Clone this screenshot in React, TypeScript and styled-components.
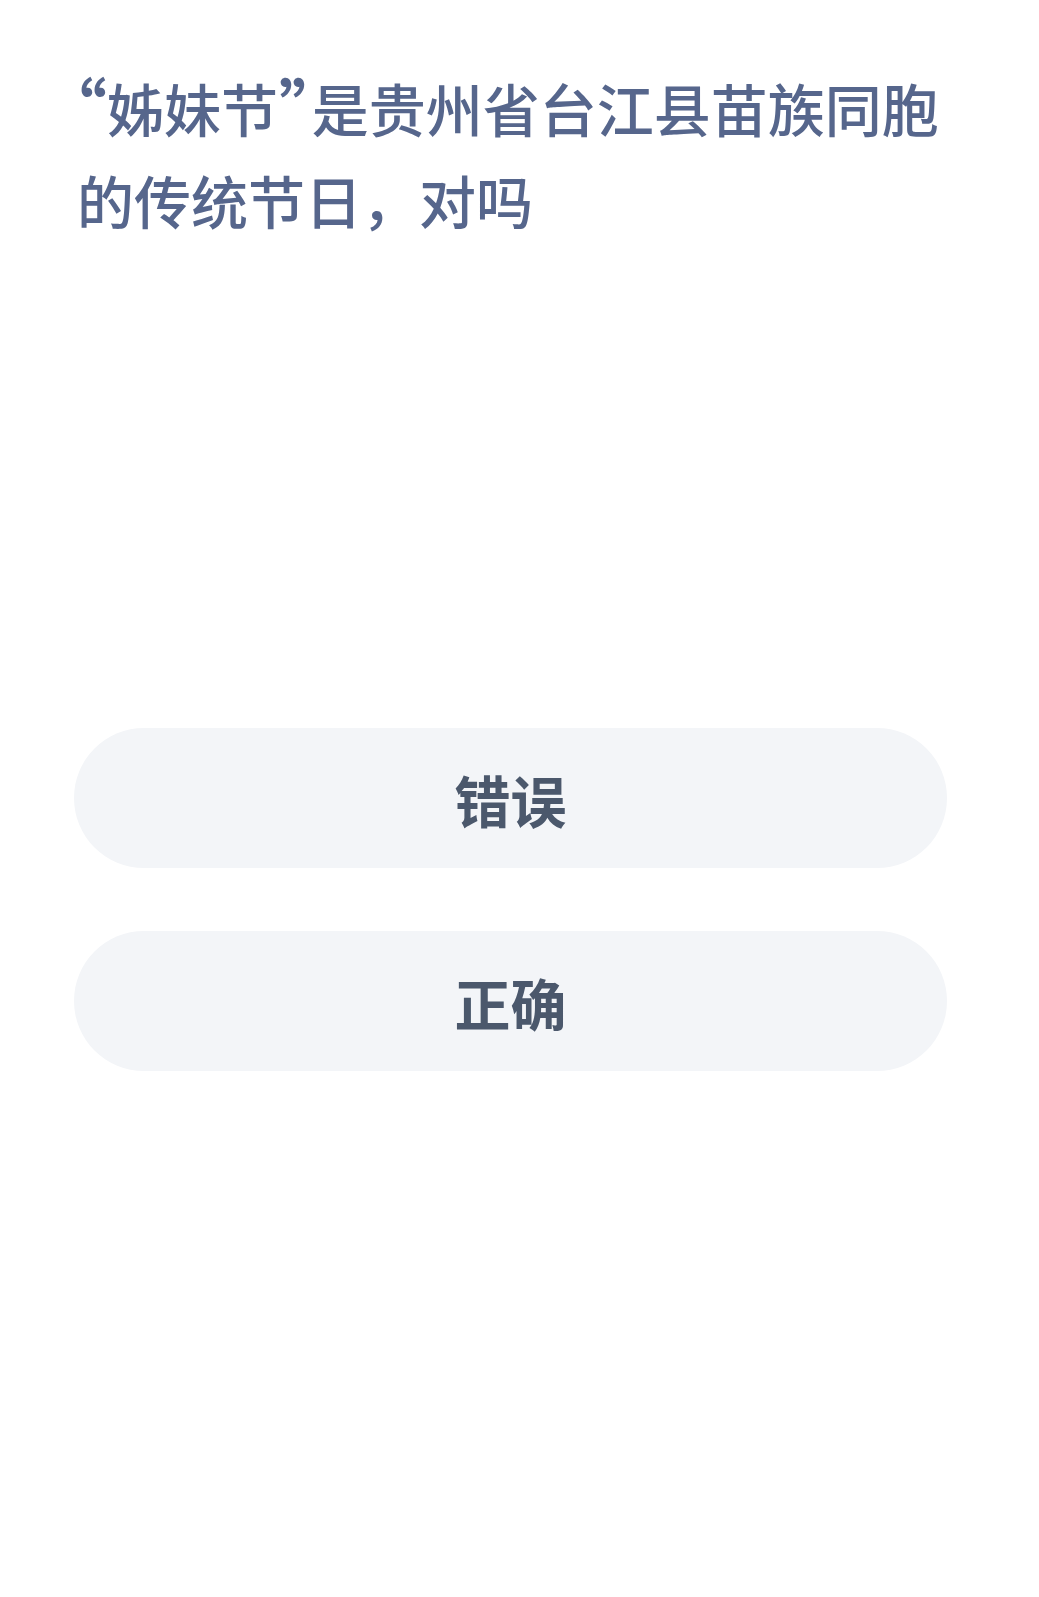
import React from "react";
import styled, { createGlobalStyle } from "styled-components";

const GlobalStyle = createGlobalStyle`
  html, body {
    margin: 0;
    padding: 0;
    background: #ffffff;
  }
  body {
    font-family: "Noto Sans CJK SC", "Noto Sans", sans-serif;
  }
`;

const options = ["错误", "正确"];

const App = () => {
  return (
    <PageStyle>
      <GlobalStyle />
      <QuestionStyle>
        <QuoteStyle side="left">“</QuoteStyle>姊妹节<QuoteStyle side="right">”</QuoteStyle>是贵州省台江县苗族同胞的传统节日，对吗
      </QuestionStyle>
      <OptionListStyle>
        {options.map((text) => (
          <OptionButtonStyle key={text}>{text}</OptionButtonStyle>
        ))}
      </OptionListStyle>
    </PageStyle>
  );
};

export default App;

const PageStyle = styled.div`
  width: 1039px;
  min-height: 1597px;
  box-sizing: border-box;
  padding: 58px 0 0 74px;
  display: flex;
  flex-direction: column;
  background: #ffffff;
`;

const QuestionStyle = styled.div`
  width: 880px;
  padding-left: 3px;
  font-family: "Noto Sans CJK SC", sans-serif;
  font-size: 57px;
  line-height: 92px;
  color: #56668c;
  font-weight: 500;
  height: 184px;
`;

// half-width quotes, a bit larger, as the app's system font draws them
const QuoteStyle = styled.span<{ side: "left" | "right" }>`
  font-feature-settings: "halt" 1;
  font-size: 1.12em;
  font-weight: 700;
  margin-left: ${(props) => (props.side === "left" ? "-2px" : "1px")};
  margin-right: ${(props) => (props.side === "left" ? "0" : "1px")};
`;

const OptionListStyle = styled.div`
  display: flex;
  flex-direction: column;
  gap: 63px;
  margin-top: 486px;
  width: 873px;
`;

const OptionButtonStyle = styled.button`
  height: 140px;
  border: none;
  border-radius: 70px;
  background: #f3f5f8;
  color: #4b586c;
  font-family: "Noto Sans CJK SC", "Noto Sans", sans-serif;
  font-size: 56px;
  font-weight: 700;
  display: flex;
  align-items: center;
  justify-content: center;
  padding: 0;
`;
